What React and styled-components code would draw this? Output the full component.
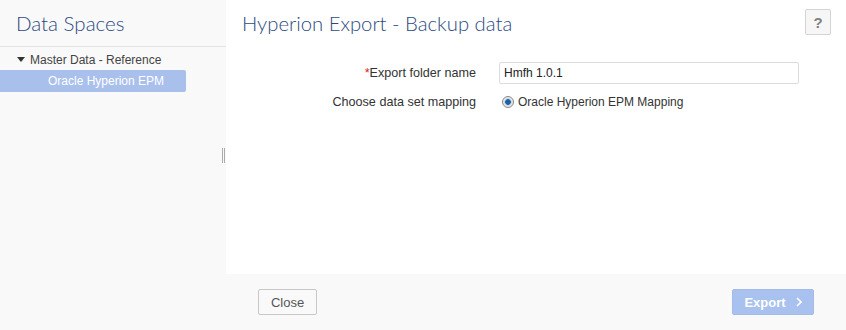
import React from 'react'
import styled, { createGlobalStyle } from 'styled-components'

const GlobalStyle = createGlobalStyle`
  body {
    margin: 0;
    font-family: "Liberation Sans", Arial, sans-serif;
    background: #f9f9f9;
  }
`

const Page = styled.div`
  display: flex;
  width: 846px;
  height: 330px;
  overflow: hidden;
`

const Sidebar = styled.div`
  width: 226px;
  flex-shrink: 0;
  background: #f9f9f9;
`

const SideTitle = styled.h2`
  margin: 0;
  height: 47px;
  box-sizing: border-box;
  padding: 11px 0 0 16px;
  font-family: Lato, sans-serif;
  font-weight: 300;
  font-size: 20.5px;
  color: #2d4a80;
  border-bottom: 1px solid #e2e2e2;
`

const Tree = styled.div`
  padding-top: 4px;
`

const TreeRow = styled.div`
  box-sizing: border-box;
  display: flex;
  align-items: center;
  height: ${p => (p.$selected ? '22px' : '17px')};
  width: ${p => (p.$selected ? '186px' : 'auto')};
  margin-top: ${p => (p.$selected ? '2px' : '0')};
  padding-left: ${p => p.$indent}px;
  background: ${p => (p.$selected ? '#a9c0ed' : 'transparent')};
  color: ${p => (p.$selected ? '#fff' : '#444')};
  font-size: 12px;
  border-radius: 0 2px 2px 0;
`

const Caret = styled.span`
  width: 0;
  height: 0;
  border-left: 4px solid transparent;
  border-right: 4px solid transparent;
  border-top: 5px solid #333;
  margin-right: 5px;
`

const Splitter = styled.div`
  width: 4px;
  flex-shrink: 0;
  display: flex;
  align-items: flex-start;
  padding-top: 148px;
  margin-left: -4px;
  gap: 1px;
  & span {
    width: 1px;
    height: 15px;
    background: #aaa;
  }
`

const Main = styled.div`
  flex: 1;
  display: flex;
  flex-direction: column;
`

const Content = styled.div`
  height: 274px;
  background: #fff;
  box-sizing: border-box;
  padding: 0 15px 0 16px;
`

const Header = styled.div`
  display: flex;
  justify-content: space-between;
  align-items: flex-start;
  height: 58px;
`

const Title = styled.h1`
  margin: 11px 0 0;
  font-family: Lato, sans-serif;
  font-weight: 300;
  font-size: 20.3px;
  color: #2d4a80;
`

const HelpButton = styled.button`
  margin-top: 9px;
  width: 26px;
  height: 26px;
  border: 1px solid #d4d4d4;
  border-radius: 2px;
  background: #f6f6f6;
  color: #808080;
  font-weight: bold;
  font-size: 15px;
  font-family: "Liberation Sans", Arial, sans-serif;
  padding: 0;
`

const Form = styled.div`
  display: grid;
  grid-template-columns: 234px 300px;
  column-gap: 23px;
  row-gap: 11px;
  align-items: center;
  margin-top: 4px;
`

const Label = styled.label`
  text-align: right;
  font-size: 12.6px;
  color: #333;
`

const Req = styled.span`
  color: #d2262d;
`

const Input = styled.input`
  box-sizing: border-box;
  width: 300px;
  height: 22px;
  border: 1px solid #dcdcdc;
  border-radius: 2px;
  padding: 0 4px;
  font-size: 12px;
  color: #222;
  font-family: "Liberation Sans", Arial, sans-serif;
  outline: none;
`

const RadioRow = styled.div`
  display: flex;
  align-items: center;
  gap: 4px;
  font-size: 12px;
  color: #333;
  height: 14px;
`

const Radio = styled.span`
  box-sizing: border-box;
  width: 12px;
  height: 12px;
  border-radius: 50%;
  border: 1px solid #888;
  background: radial-gradient(circle, #1d5fa0 0 2.5px, #9cc3e8 3px, #e8e8e8 4px);
  margin-left: 3px;
`

const Footer = styled.div`
  flex: 1;
  display: flex;
  justify-content: space-between;
  align-items: flex-start;
  padding: 15px 32px 0 32px;
  background: #f9f9f9;
`

const Button = styled.button`
  height: 26px;
  box-sizing: border-box;
  border-radius: 2px;
  font-family: "Liberation Sans", Arial, sans-serif;
  font-size: 13px;
  padding: 0;
  border: 1px solid ${p => (p.$primary ? '#a3bbe6' : '#c8c8c8')};
  background: ${p => (p.$primary ? '#a9c1ee' : '#f9f9f9')};
  color: ${p => (p.$primary ? '#fff' : '#555')};
  font-weight: ${p => (p.$primary ? 'bold' : 'normal')};
  width: ${p => p.$w}px;
  display: flex;
  align-items: center;
  justify-content: center;
  gap: 10px;
`

export default function App() {
  return (
    <>
      <GlobalStyle />
      <Page>
        <Sidebar>
          <SideTitle>Data Spaces</SideTitle>
          <Tree>
            <TreeRow $indent={17}>
              <Caret />
              Master Data - Reference
            </TreeRow>
            <TreeRow $indent={48} $selected>Oracle Hyperion EPM</TreeRow>
          </Tree>
        </Sidebar>
        <Splitter>
          <span />
          <span />
        </Splitter>
        <Main>
          <Content>
            <Header>
              <Title>Hyperion Export - Backup data</Title>
              <HelpButton>?</HelpButton>
            </Header>
            <Form>
              <Label><Req>*</Req>Export folder name</Label>
              <Input defaultValue="Hmfh 1.0.1" />
              <Label>Choose data set mapping</Label>
              <RadioRow>
                <Radio />
                Oracle Hyperion EPM Mapping
              </RadioRow>
            </Form>
          </Content>
          <Footer>
            <Button $w={59}>Close</Button>
            <Button $primary $w={82}>
              Export
              <svg width="6" height="10" viewBox="0 0 6 10">
                <path d="M1 1l4 4-4 4" stroke="#fff" strokeWidth="1.6" fill="none" />
              </svg>
            </Button>
          </Footer>
        </Main>
      </Page>
    </>
  )
}
